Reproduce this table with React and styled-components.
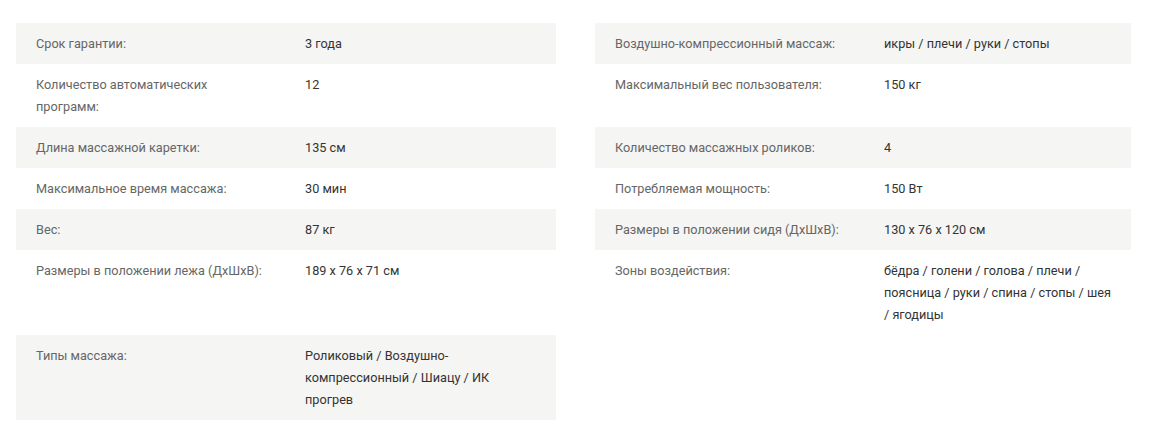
import React from 'react';
import styled, { createGlobalStyle } from 'styled-components';

const GlobalStyle = createGlobalStyle`
    body {
        margin: 0;
        background: #fff;
        font-family: Roboto, "Liberation Sans", Arial, sans-serif;
    }
`;

const Specs = styled.div`
    display: grid;
    grid-template-columns: 540px 536px;
    column-gap: 39px;
    padding: 23px 0 0 16px;
`;

const Row = styled.div`
    display: grid;
    grid-template-columns: 269px 1fr;
    padding: 9.5px 18px 9.5px 20px;
    background: ${p => (p.$shaded ? '#f5f5f4' : '#fff')};
    font-size: 12.7px;
    line-height: 22px;
`;

const Label = styled.span`
    color: #666;
    padding-right: 37px;
`;

const Value = styled.span`
    color: #333;
`;

const left = [
    ['Срок гарантии:', '3 года'],
    ['Количество автоматических программ:', '12'],
    ['Длина массажной каретки:', '135 см'],
    ['Максимальное время массажа:', '30 мин'],
    ['Вес:', '87 кг'],
    ['Размеры в положении лежа (ДхШхВ):', '189 x 76 x 71 см'],
    ['Типы массажа:', 'Роликовый / Воздушно-компрессионный / Шиацу / ИК прогрев']
];

const right = [
    ['Воздушно-компрессионный массаж:', 'икры / плечи / руки / стопы'],
    ['Максимальный вес пользователя:', '150 кг'],
    ['Количество массажных роликов:', '4'],
    ['Потребляемая мощность:', '150 Вт'],
    ['Размеры в положении сидя (ДхШхВ):', '130 x 76 x 120 см'],
    ['Зоны воздействия:', 'бёдра / голени / голова / плечи / поясница / руки / спина / стопы / шея / ягодицы']
];

export default function App() {
    const cells = [];
    left.forEach((item, i) => {
        cells.push(
            <Row key={`l${i}`} $shaded={i % 2 === 0}>
                <Label>{item[0]}</Label>
                <Value>{item[1]}</Value>
            </Row>
        );
        if (right[i]) {
            cells.push(
                <Row key={`r${i}`} $shaded={i % 2 === 0}>
                    <Label>{right[i][0]}</Label>
                    <Value>{right[i][1]}</Value>
                </Row>
            );
        }
    });

    return (
        <>
            <GlobalStyle />
            <Specs>{cells}</Specs>
        </>
    );
}
